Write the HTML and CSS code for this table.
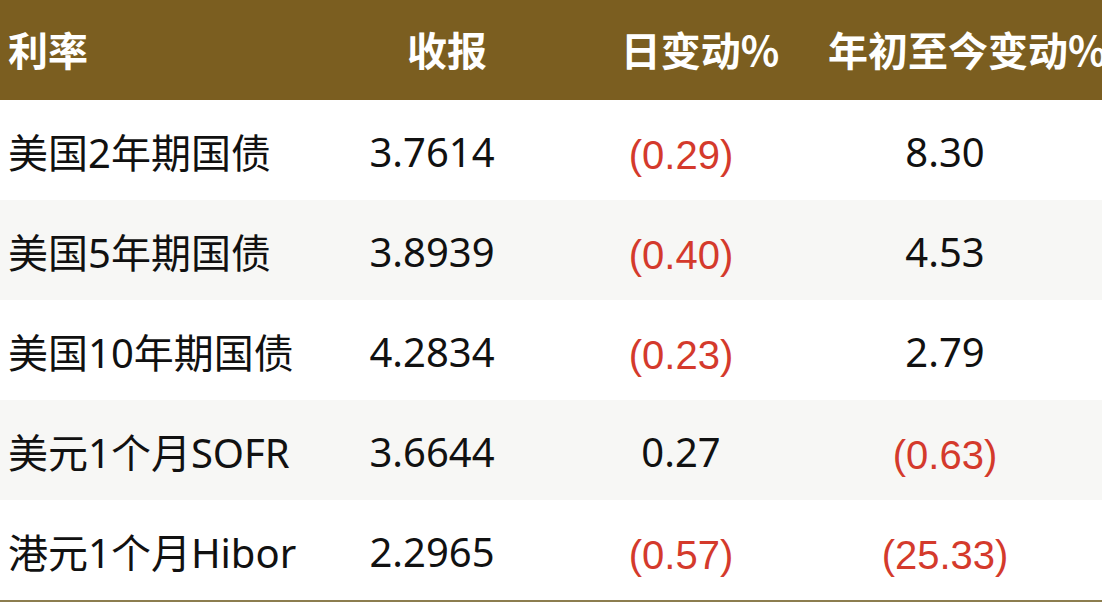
FILE: index.html
```html
<!DOCTYPE html>
<html lang="zh-CN">
<head>
<meta charset="utf-8">
<title>利率</title>
<link rel="stylesheet" href="styles.css">
</head>
<body>
<div class="table">
  <div class="row head">
    <div class="cell c1">利率</div>
    <div class="cell c2">收报</div>
    <div class="cell c3">日变动%</div>
    <div class="cell c4">年初至今变动%</div>
  </div>
  <div class="row">
    <div class="cell c1 label">美国2年期国债</div>
    <div class="cell c2 num">3.7614</div>
    <div class="cell c3 neg">(0.29)</div>
    <div class="cell c4 num">8.30</div>
  </div>
  <div class="row alt">
    <div class="cell c1 label">美国5年期国债</div>
    <div class="cell c2 num">3.8939</div>
    <div class="cell c3 neg">(0.40)</div>
    <div class="cell c4 num">4.53</div>
  </div>
  <div class="row">
    <div class="cell c1 label">美国10年期国债</div>
    <div class="cell c2 num">4.2834</div>
    <div class="cell c3 neg">(0.23)</div>
    <div class="cell c4 num">2.79</div>
  </div>
  <div class="row alt">
    <div class="cell c1 label">美元1个月SOFR</div>
    <div class="cell c2 num">3.6644</div>
    <div class="cell c3 num">0.27</div>
    <div class="cell c4 neg">(0.63)</div>
  </div>
  <div class="row last">
    <div class="cell c1 label">港元1个月Hibor</div>
    <div class="cell c2 num">2.2965</div>
    <div class="cell c3 neg">(0.57)</div>
    <div class="cell c4 neg">(25.33)</div>
  </div>
</div>
</body>
</html>
```
FILE: styles.css
```css
html, body {
  margin: 0;
  padding: 0;
  background: #ffffff;
}
body {
  font-family: "Noto Sans", "Noto Sans CJK SC", sans-serif;
  color: #111111;
}
.table {
  width: 1102px;
  overflow: hidden;
}
.row {
  display: grid;
  grid-template-columns: 330px 204px 294px 274px;
  height: 100px;
  align-items: center;
  background: #ffffff;
}
.row.alt {
  background: #f7f7f5;
}
.row.last {
  border-bottom: 2px solid #8c7d4f;
}
.head {
  background: #7b5e20;
  color: #ffffff;
}
.cell {
  font-size: 40px;
  line-height: 1;
  white-space: nowrap;
}
.head .cell {
  font-family: "Noto Sans CJK SC", sans-serif;
  font-weight: 700;
  padding-bottom: 2px;
}
.head .c1 {
  padding-left: 8px;
}
.head .c2 {
  text-align: center;
  padding-left: 30px;
}
.head .c3 {
  text-align: center;
  padding-left: 38px;
}
.head .c4 {
  text-align: left;
}
.label {
  padding-left: 8px;
  padding-top: 6px;
  font-family: "Noto Sans", "Noto Sans CJK SC", sans-serif;
}
.c2, .c3 {
  text-align: center;
}
.row .c4 {
  text-align: center;
  padding-right: 40px;
}
.head .c4 {
  padding-right: 0;
}
.num {
  font-family: "Noto Sans", sans-serif;
  color: #111111;
  padding-top: 4px;
}
.neg {
  font-family: "Liberation Sans", sans-serif;
  color: #d43a2c;
  padding-top: 10px;
}
```
